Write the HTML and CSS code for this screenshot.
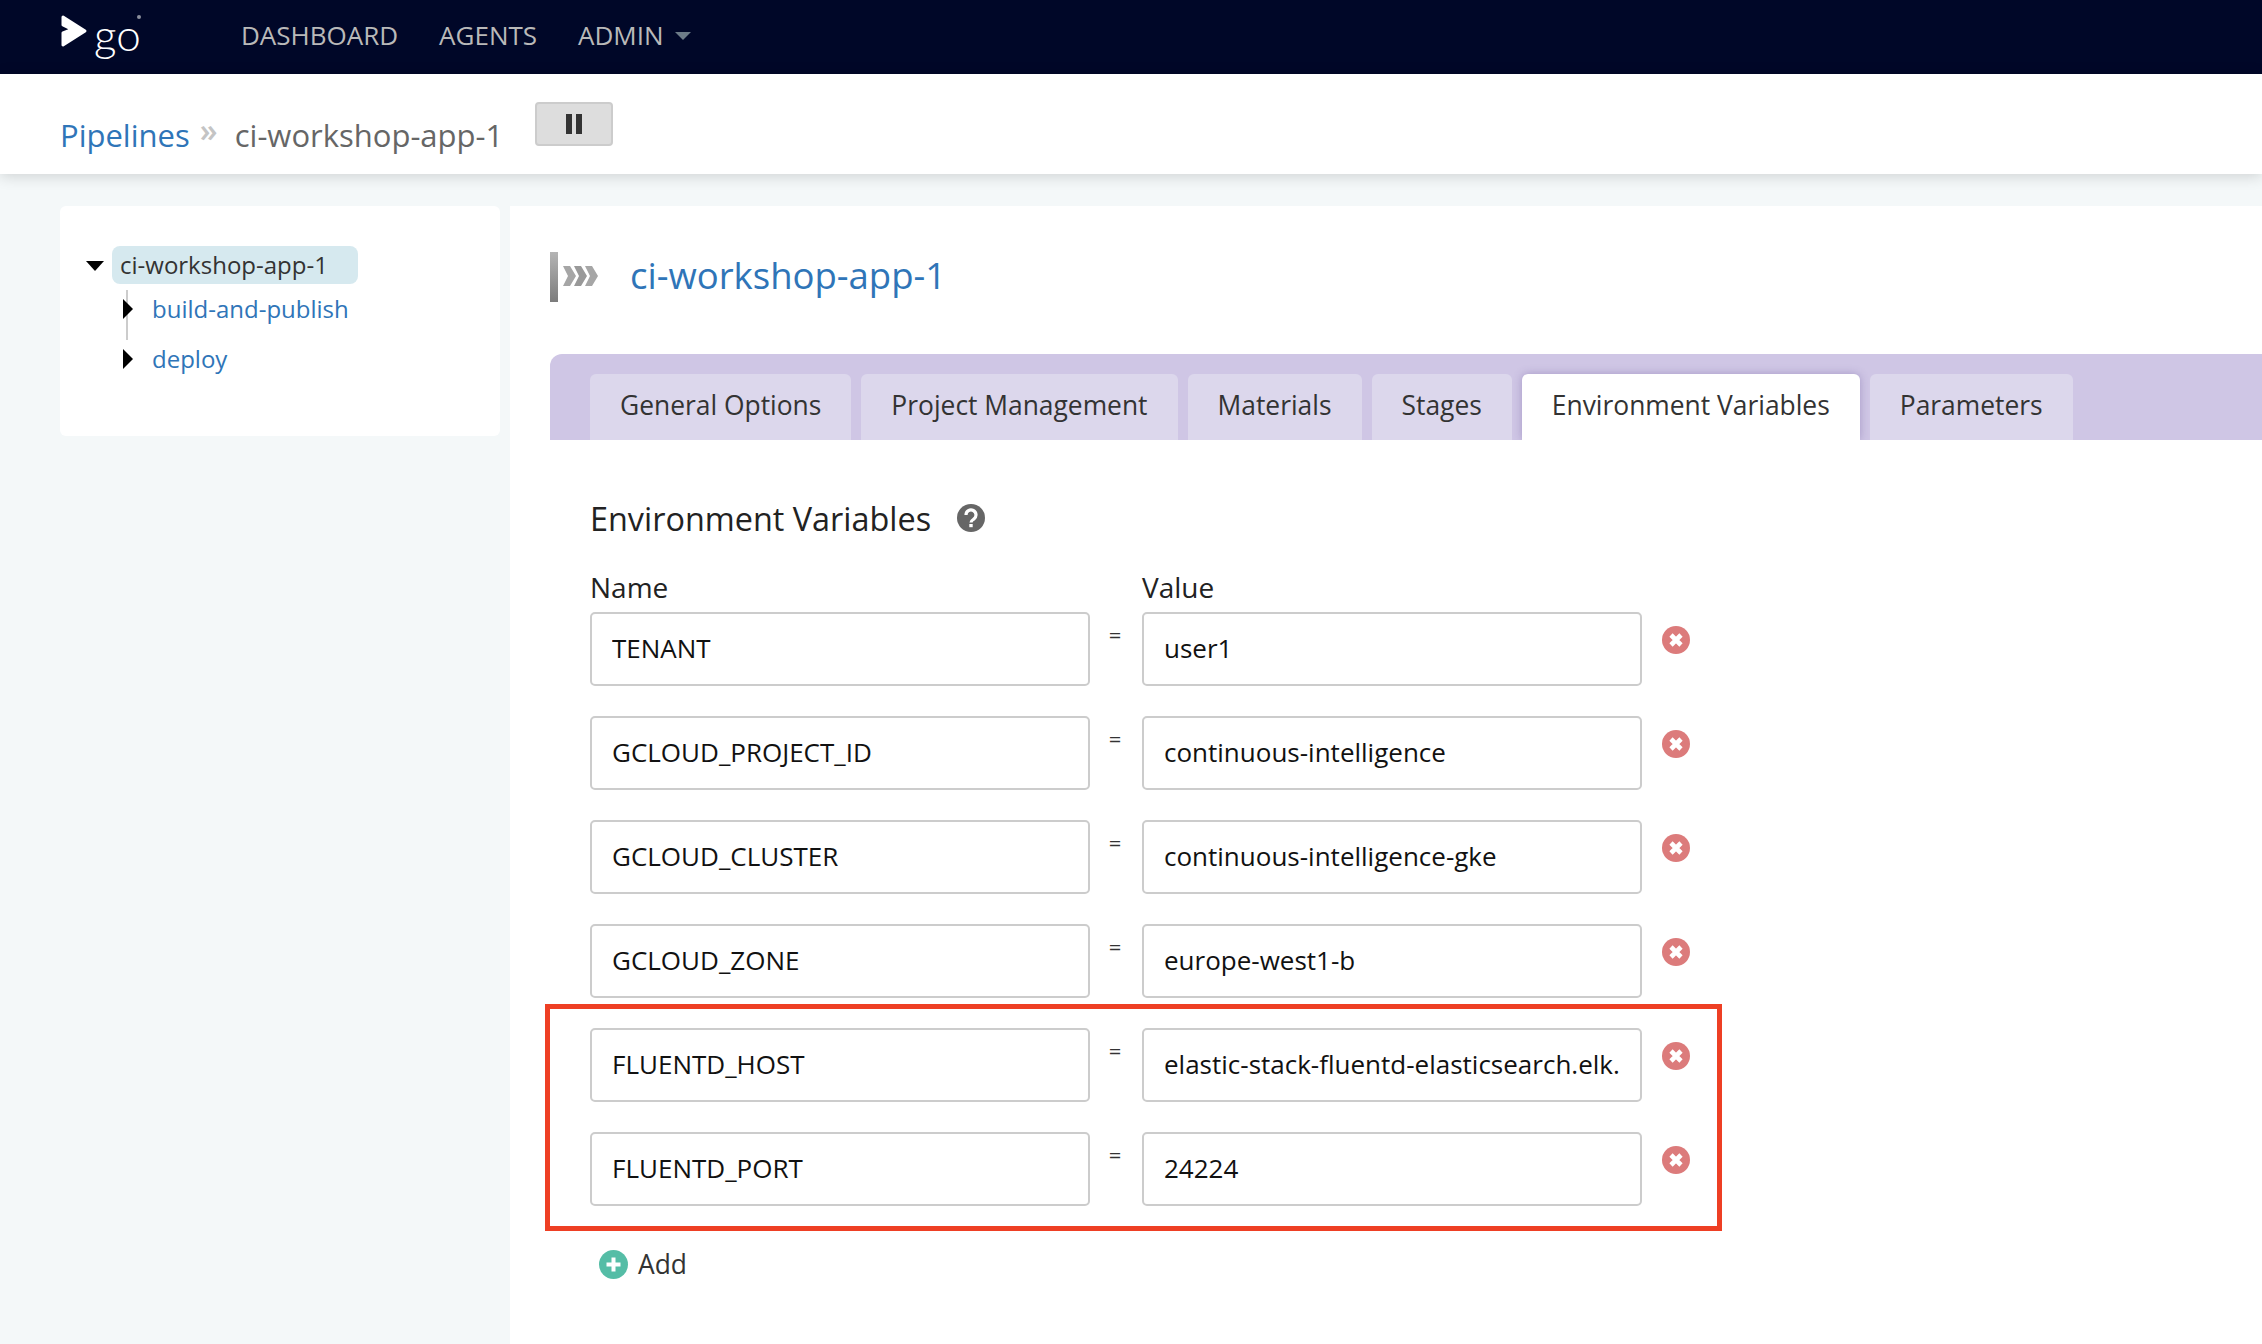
FILE: index.html
```html
<!DOCTYPE html>
<html lang="en">
<head>
  <meta charset="UTF-8">
  <title>ci-workshop-app-1 - Go</title>
  <link rel="stylesheet" href="styles.css">
</head>
<body>
  <nav class="topnav">
    <a class="logo" href="#">
      <svg class="logo-mark" viewBox="0 0 28 34" width="28" height="34">
        <path d="M3 3 L25 17 L3 31 L3 19 L12 15.5 L3 11 Z" fill="#fff" stroke="#fff" stroke-width="3" stroke-linejoin="round"/>
      </svg>
      <span class="logo-text">go</span>
      <span class="logo-reg"></span>
    </a>
    <a class="nav-link" href="#">DASHBOARD</a>
    <a class="nav-link" href="#">AGENTS</a>
    <a class="nav-link" href="#">ADMIN<span class="nav-caret"></span></a>
  </nav>

  <header class="subheader">
    <a class="crumb-link" href="#">Pipelines</a>
    <span class="crumb-sep">»</span>
    <span class="crumb-current">ci-workshop-app-1</span>
    <button class="pause-btn" type="button"><span></span><span></span></button>
  </header>

  <div class="page">
    <aside class="sidebar">
      <div class="tree-root">
        <span class="caret-down"></span>
        <span class="tree-selected">ci-workshop-app-1</span>
      </div>
      <ul class="tree-list">
        <li class="tree-item"><span class="caret-right"></span><a href="#">build-and-publish</a></li>
        <li class="tree-item"><span class="caret-right"></span><a href="#">deploy</a></li>
      </ul>
    </aside>

    <main class="panel">
      <div class="title-row">
        <svg class="pipeline-icon" viewBox="0 0 50 50" width="50" height="50">
          <defs>
            <linearGradient id="bar" x1="0" y1="0" x2="0" y2="1">
              <stop offset="0" stop-color="#b4b4b4"/>
              <stop offset="1" stop-color="#7c7c7c"/>
            </linearGradient>
          </defs>
          <rect x="0" y="0" width="8" height="50" fill="url(#bar)"/>
          <path d="M13 14h7l6 10-6 10h-7l5-10z" fill="#a6a6a6"/>
          <path d="M24 14h7l6 10-6 10h-7l5-10z" fill="#999"/>
          <path d="M35 14h7l6 10-6 10h-7l5-10z" fill="#a6a6a6"/>
        </svg>
        <h1 class="pipeline-title">ci-workshop-app-1</h1>
      </div>

      <div class="tabs">
        <a class="tab" href="#">General Options</a>
        <a class="tab" href="#">Project Management</a>
        <a class="tab" href="#">Materials</a>
        <a class="tab" href="#">Stages</a>
        <a class="tab active" href="#">Environment Variables</a>
        <a class="tab" href="#">Parameters</a>
      </div>

      <section class="tab-content">
        <h2 class="section-title">Environment Variables
          <svg class="help-icon" viewBox="0 0 28 28" width="28" height="28">
            <circle cx="14" cy="14" r="14" fill="#666"/>
            <path d="M9 11a5 5 0 1 1 7.8 4.1c-1.8 1.2-2.8 1.8-2.8 3.4" fill="none" stroke="#fff" stroke-width="3.2"/>
            <rect x="12.3" y="20" width="3.4" height="3.2" fill="#fff"/>
          </svg>
        </h2>

        <div class="env-labels">
          <label class="env-label">Name</label>
          <label class="env-label env-label-value">Value</label>
        </div>

        <div class="env-list">
          <div class="env-row">
            <input class="env-input" type="text" value="TENANT">
            <span class="env-eq">=</span>
            <input class="env-input" type="text" value="user1">
            <svg class="remove-icon" viewBox="0 0 28 28" width="28" height="28"><circle cx="14" cy="14" r="14" fill="#dc7b7b"/><path d="M9 9l10 10M19 9L9 19" stroke="#fff" stroke-width="4.6"/></svg>
          </div>
          <div class="env-row">
            <input class="env-input" type="text" value="GCLOUD_PROJECT_ID">
            <span class="env-eq">=</span>
            <input class="env-input" type="text" value="continuous-intelligence">
            <svg class="remove-icon" viewBox="0 0 28 28" width="28" height="28"><circle cx="14" cy="14" r="14" fill="#dc7b7b"/><path d="M9 9l10 10M19 9L9 19" stroke="#fff" stroke-width="4.6"/></svg>
          </div>
          <div class="env-row">
            <input class="env-input" type="text" value="GCLOUD_CLUSTER">
            <span class="env-eq">=</span>
            <input class="env-input" type="text" value="continuous-intelligence-gke">
            <svg class="remove-icon" viewBox="0 0 28 28" width="28" height="28"><circle cx="14" cy="14" r="14" fill="#dc7b7b"/><path d="M9 9l10 10M19 9L9 19" stroke="#fff" stroke-width="4.6"/></svg>
          </div>
          <div class="env-row">
            <input class="env-input" type="text" value="GCLOUD_ZONE">
            <span class="env-eq">=</span>
            <input class="env-input" type="text" value="europe-west1-b">
            <svg class="remove-icon" viewBox="0 0 28 28" width="28" height="28"><circle cx="14" cy="14" r="14" fill="#dc7b7b"/><path d="M9 9l10 10M19 9L9 19" stroke="#fff" stroke-width="4.6"/></svg>
          </div>
          <div class="env-highlight">
            <div class="env-row">
              <input class="env-input" type="text" value="FLUENTD_HOST">
              <span class="env-eq">=</span>
              <input class="env-input" type="text" value="elastic-stack-fluentd-elasticsearch.elk.svc.cluster.local">
              <svg class="remove-icon" viewBox="0 0 28 28" width="28" height="28"><circle cx="14" cy="14" r="14" fill="#dc7b7b"/><path d="M9 9l10 10M19 9L9 19" stroke="#fff" stroke-width="4.6"/></svg>
            </div>
            <div class="env-row">
              <input class="env-input" type="text" value="FLUENTD_PORT">
              <span class="env-eq">=</span>
              <input class="env-input" type="text" value="24224">
              <svg class="remove-icon" viewBox="0 0 28 28" width="28" height="28"><circle cx="14" cy="14" r="14" fill="#dc7b7b"/><path d="M9 9l10 10M19 9L9 19" stroke="#fff" stroke-width="4.6"/></svg>
            </div>
          </div>
        </div>

        <a class="add-link" href="#">
          <svg viewBox="0 0 29 29" width="29" height="29"><circle cx="14.5" cy="14.5" r="14.5" fill="#55bda6"/><path d="M14.5 7.5v14M7.5 14.5h14" stroke="#fff" stroke-width="4"/></svg>
          Add
        </a>
      </section>
    </main>
  </div>
</body>
</html>
```

FILE: styles.css
```css
* {
  margin: 0;
  padding: 0;
  box-sizing: border-box;
}
html, body {
  height: 1344px;
  overflow: hidden;
}
body {
  font-family: "Open Sans", sans-serif;
  background-color: #f4f8f9;
  color: #333;
}
a {
  text-decoration: none;
}

/* top navigation */
.topnav {
  height: 74px;
  background-color: #000728;
  display: flex;
  align-items: center;
  padding-left: 60px;
}
.logo {
  display: flex;
  align-items: center;
  gap: 6px;
  width: 181px;
  height: 74px;
  margin-top: -12px;
  position: relative;
}
.logo-text {
  font-family: Lato, sans-serif;
  font-weight: 300;
  font-size: 44px;
  line-height: 44px;
  color: #fff;
  margin-top: 6px;
}
.logo-reg {
  position: absolute;
  left: 77px;
  top: 21px;
  width: 4px;
  height: 4px;
  border-radius: 50%;
  background-color: #8b8f9c;
}
.nav-link {
  color: #b9b9b9;
  font-size: 26px;
  margin-right: 41px;
  margin-top: -5px;
  display: flex;
  align-items: center;
}
.nav-caret {
  width: 0;
  height: 0;
  border-left: 8px solid transparent;
  border-right: 8px solid transparent;
  border-top: 8px solid #6d7c88;
  margin-left: 11px;
  margin-top: 2px;
}

/* breadcrumb bar */
.subheader {
  height: 100px;
  background-color: #fff;
  box-shadow: 0 2px 14px rgba(0, 0, 0, 0.16);
  display: flex;
  align-items: flex-start;
  padding-left: 60px;
  position: relative;
}
.crumb-link {
  color: #2f75b8;
  font-size: 31px;
  margin-top: 40px;
}
.crumb-sep {
  width: 45px;
  padding-left: 10px;
  color: #c4c4c4;
  font-size: 32px;
  font-weight: 600;
  margin-top: 34px;
}
.crumb-current {
  color: #666;
  font-size: 31px;
  margin-top: 40px;
}
.pause-btn {
  width: 78px;
  height: 44px;
  margin: 28px 0 0 32px;
  background-color: #ddd;
  border: 2px solid #ccc;
  border-radius: 4px;
  display: flex;
  align-items: center;
  justify-content: center;
  gap: 4px;
}
.pause-btn span {
  width: 6px;
  height: 20px;
  background-color: #333;
}

/* page layout */
.page {
  display: flex;
  align-items: flex-start;
  gap: 10px;
  padding: 32px 0 0 60px;
}
.sidebar {
  width: 440px;
  height: 230px;
  flex-shrink: 0;
  background-color: #fff;
  border-radius: 6px;
  padding: 40px 0 0 26px;
  font-size: 24px;
}
.tree-root {
  display: flex;
  align-items: center;
  gap: 8px;
}
.caret-down {
  width: 0;
  height: 0;
  border-left: 9px solid transparent;
  border-right: 9px solid transparent;
  border-top: 10px solid #000;
  margin-top: 2px;
}
.tree-selected {
  width: 246px;
  height: 38px;
  line-height: 38px;
  padding-left: 8px;
  background-color: #d6e9ef;
  border-radius: 8px;
  color: #333;
}
.tree-list {
  list-style: none;
  margin: 6px 0 0 40px;
}
.tree-item {
  height: 50px;
  display: flex;
  align-items: flex-start;
  gap: 19px;
  line-height: 38px;
  position: relative;
}
.tree-item:first-child::before {
  content: "";
  position: absolute;
  left: 0;
  top: 0;
  width: 2px;
  height: 50px;
  background-color: #ccc;
}
.tree-item a {
  color: #2f75b8;
}
.caret-right {
  width: 0;
  height: 0;
  margin: 9px 0 0 -3px;
  border-top: 10px solid transparent;
  border-bottom: 10px solid transparent;
  border-left: 10px solid #000;
  position: relative;
}

/* main panel */
.panel {
  flex: 1;
  height: 1138px;
  background-color: #fff;
  padding: 46px 0 0 40px;
  min-width: 0;
}
.title-row {
  display: flex;
  align-items: center;
  gap: 30px;
}
.pipeline-title {
  font-size: 36.5px;
  font-weight: 500;
  color: #2f75b8;
  line-height: 44px;
  margin-top: -5px;
}
.tabs {
  margin-top: 52px;
  height: 86px;
  padding: 20px 0 0 40px;
  background-color: #cfc6e5;
  border-top-left-radius: 12px;
  display: flex;
  gap: 10px;
}
.tab {
  height: 66px;
  line-height: 63px;
  padding: 0 30px;
  background-color: #dcd7ec;
  border-radius: 6px 6px 0 0;
  color: #333;
  font-size: 26.4px;
  font-weight: 500;
}
.tab.active {
  background-color: #fff;
  box-shadow: 0 0 8px rgba(90, 70, 140, 0.35);
  clip-path: inset(-10px -10px 0 -10px);
}

/* environment variables form */
.tab-content {
  padding: 58px 0 0 40px;
}
.section-title {
  font-size: 32.4px;
  font-weight: 500;
  line-height: 40px;
  color: #222;
  display: flex;
  align-items: center;
  gap: 26px;
}
.env-labels {
  display: flex;
  margin-top: 32px;
  margin-bottom: 8px;
}
.env-label {
  width: 500px;
  font-size: 28px;
  line-height: 34px;
  color: #222;
}
.env-label-value {
  margin-left: 52px;
}
.env-list {
  display: flex;
  flex-direction: column;
  gap: 30px;
}
.env-highlight {
  display: flex;
  flex-direction: column;
  gap: 30px;
  position: relative;
}
.env-highlight::after {
  content: "";
  box-sizing: border-box;
  position: absolute;
  top: -24px;
  bottom: -25px;
  left: -45px;
  width: 1177px;
  border: 5px solid #ee3f24;
  pointer-events: none;
}
.env-row {
  display: flex;
  align-items: flex-start;
}
.env-input {
  width: 500px;
  height: 74px;
  padding: 0 20px 2px;
  border: 2px solid #ccc;
  border-radius: 5px;
  font-family: "Open Sans", sans-serif;
  font-size: 26px;
  color: #111;
  background-color: #fff;
}
.env-eq {
  width: 50px;
  margin-right: 2px;
  text-align: center;
  font-size: 22px;
  line-height: 22px;
  margin-top: 11px;
  color: #333;
}
.remove-icon {
  margin: 14px 0 0 20px;
}
.add-link {
  display: inline-flex;
  align-items: center;
  gap: 10px;
  margin: 40px 0 0 9px;
  font-size: 26.4px;
  font-weight: 500;
  color: #333;
}
```
